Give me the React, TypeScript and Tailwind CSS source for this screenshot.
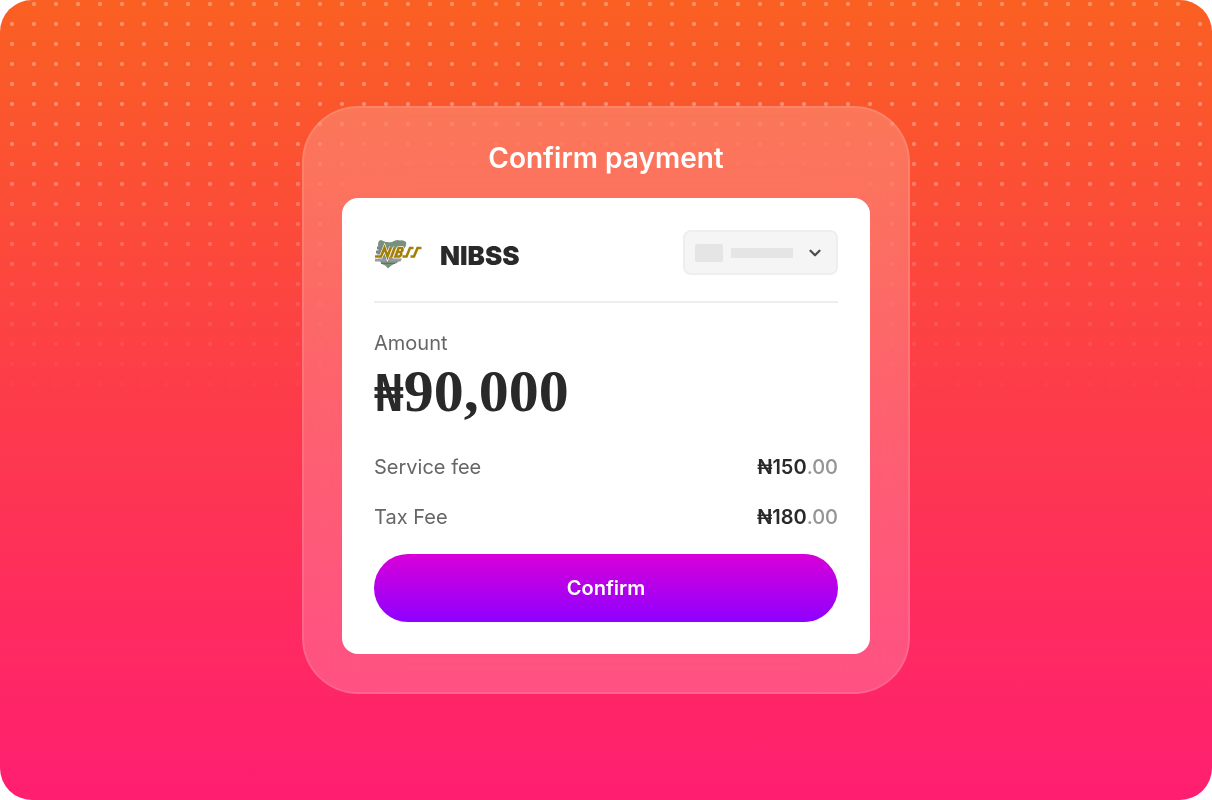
import React from 'react';
import { FiChevronDown } from 'react-icons/fi';

const fees = [
  { label: 'Service fee', whole: '₦150', cents: '.00' },
  { label: 'Tax Fee', whole: '₦180', cents: '.00' },
];

const App = () => {
  return (
    <div className="bg-white">
      <main className="relative isolate flex min-h-screen items-center justify-center overflow-hidden rounded-[32px] bg-linear-to-b/srgb from-[#fa6022] via-[#fd3b4a] to-[#ff1e70] font-['Inter',sans-serif]">
        {/* Dotted pattern */}
        <div className="pointer-events-none absolute inset-x-0 top-0 h-[404px] bg-[radial-gradient(circle_at_12px_4px,rgba(255,255,255,0.3)_1.8px,transparent_2.5px)] bg-size-[22px_20px] mask-[linear-gradient(to_bottom,black_35%,transparent)]"></div>

        {/* Glass panel */}
        <section className="relative w-full max-w-[608px] rounded-[56px] border-2 border-white/10 bg-white/20 px-[38px] pt-8 pb-[38px] backdrop-blur-2xl">
          <h1 className="mb-[22px] text-center text-[28px] leading-9 font-semibold text-white">Confirm payment</h1>

          <form className="rounded-2xl bg-white p-8" onSubmit={(e) => e.preventDefault()}>
            <div className="flex items-center justify-between border-b-2 border-[#eeeeee] pb-[26px]">
              <div className="flex items-center gap-[18px]">
                <NibssLogo />
                <h2 className="pt-1.5 text-[26px] leading-9 font-black text-[#292929]">NIBSS</h2>
              </div>
              <AccountSelect />
            </div>

            <p className="mt-[26px] text-xl leading-7 text-[#666666]">Amount</p>
            <p className="mt-[2px] flex h-16 items-baseline text-[#292929] leading-[64px] font-bold">
              <span className="font-['Noto_Sans',sans-serif] text-[52px]">₦</span>
              <span className="font-['Liberation_Serif',serif] text-[60px]">90,000</span>
            </p>

            <dl className="mt-[30px] mb-[23px] space-y-[22px] text-xl leading-7">
              {fees.map((fee) => (
                <FeeRow key={fee.label} {...fee} />
              ))}
            </dl>

            <button
              type="submit"
              className="h-[68px] w-full rounded-full bg-linear-to-b/srgb from-[#d800d8] to-[#8f00ff] text-xl font-semibold text-white"
            >
              Confirm
            </button>
          </form>
        </section>
      </main>
    </div>
  );
};

const FeeRow = ({ label, whole, cents }: { label: string, whole: string, cents: string }) => {
  return (
    <div className="flex justify-between">
      <dt className="text-[#666666]">{label}</dt>
      <dd className="font-medium text-[#949494]">
        <span className="font-semibold text-[#292929]">{whole}</span>
        {cents}
      </dd>
    </div>
  );
};

const AccountSelect = () => {
  return (
    <div className="grid h-[45px] w-[155px]">
      <select
        aria-label="Account"
        className="col-start-1 row-start-1 appearance-none rounded-lg border-2 border-[#eeeeee] bg-[#f5f5f5]"
      ></select>
      <div className="pointer-events-none col-start-1 row-start-1 flex items-center gap-2 pr-[14px] pl-3">
        <span className="h-[18px] w-7 rounded-xs bg-[#e5e5e5]"></span>
        <span className="h-[10px] w-[62px] bg-[#e5e5e5]"></span>
        <FiChevronDown className="ml-auto size-[18px] text-[#4d4d4d]" strokeWidth={3} />
      </div>
    </div>
  );
};

const NibssLogo = () => {
  const letters = (
    <>
      <path d="M1 20.5 H7 L10.5 12 L13.5 20.5 L17 11" />
      <path d="M17 21.5 L21 11" />
      <path d="M24.5 12 H28 Q29.5 14.5 27 16 H24 M26.500 16 Q28.5 18.5 25.5 20.5 H21.5 L25 11" />
      <path d="M28.5 20.5 H32.5 L36 12 H39.5" />
      <path d="M36.5 20.5 H40 L43.5 12 H47.5" />
    </>
  );

  return (
    <svg width="48" height="34" viewBox="0 0 48 34" aria-hidden="true">
      {/* shield */}
      <path d="M4 9 Q4 4.5 7 4 Q12 7 18 6 Q23 3 26 4.5 Q29 3.5 32 6 Q33 9 30 13 L27 21 Q25 27 20 28 Q16 30 14 32.5 Q12 29 8 28 Q6 26 5 23 L2 20 Q6 14 4 9 Z" fill="#78917f" />
      <path d="M1 22.5 H28 L26.5 25.5 H1 Z" fill="#9a9b9c" />
      <path d="M3 12 H7 M2 16 H6" stroke="#7b8585" strokeWidth="3" />
      <path d="M7 27.5 H21" stroke="#5f7568" strokeWidth="1" />
      {/* lettering strokes */}
      <g fill="none" stroke="#ffffff" strokeWidth="3.8">{letters}</g>
      <g fill="none" stroke="#a47f08" strokeWidth="2.6">{letters}</g>
    </svg>
  );
};

export default App;
